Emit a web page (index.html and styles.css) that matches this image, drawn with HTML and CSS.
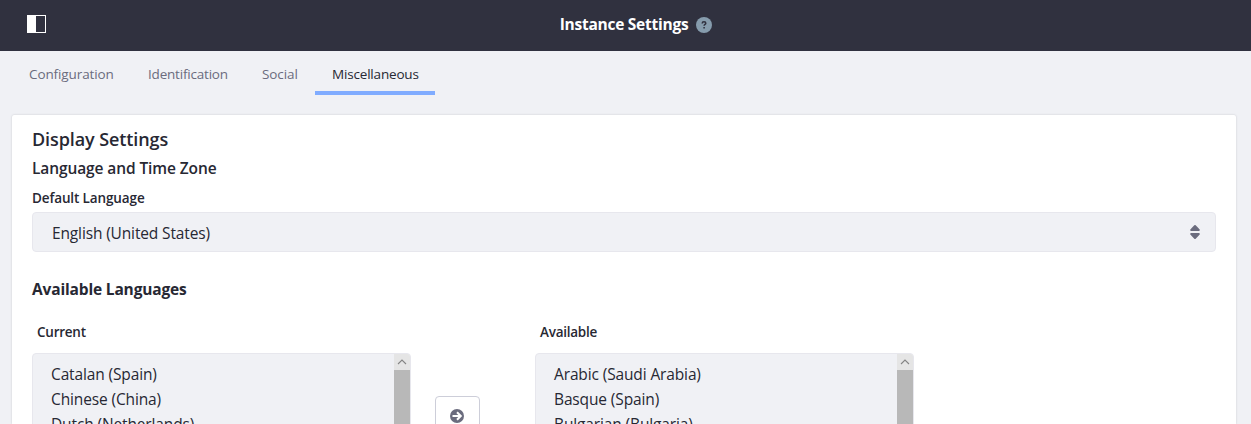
FILE: index.html
```html
<!DOCTYPE html>
<html lang="en">
<head>
<meta charset="utf-8">
<title>Instance Settings</title>
<link rel="stylesheet" href="styles.css">
</head>
<body>
<header class="topbar">
  <svg class="menu-icon" width="19" height="18" viewBox="0 0 19 18"><rect x=".5" y=".5" width="18" height="17" fill="none" stroke="#fff"/><path d="M0 0h9v18H0z" fill="#fff"/></svg>
  <h1 class="title">Instance Settings</h1>
  <svg class="help" width="16" height="16" viewBox="0 0 16 16"><circle cx="8" cy="8" r="8" fill="#869cad"/><path d="M6.2 6.4c0-1.1.8-1.6 1.8-1.6s1.8.5 1.8 1.4c0 1.3-1.7 1.2-1.7 2.6M8.1 9.9v1.5" fill="none" stroke="#30313f" stroke-width="1.5"/></svg>
</header>
<nav class="tabs">
  <a class="tab t1">Configuration</a>
  <a class="tab t2">Identification</a>
  <a class="tab t3">Social</a>
  <a class="tab t4 active">Miscellaneous</a>
</nav>
<main class="sheet">
  <h2 class="h-display">Display Settings</h2>
  <h3 class="h-zone">Language and Time Zone</h3>
  <label class="label">Default Language</label>
  <div class="select">
    <span>English (United States)</span>
    <svg width="10" height="14" viewBox="0 0 10 14" fill="#6b6c7e"><path d="M4.3.3Q5-.3 5.7.3L9.7 4.4Q10 6 9 6H1Q0 6 .3 4.4zM4.3 13.7Q5 14.3 5.7 13.7L9.7 9.6Q10 8 9 8H1Q0 8 .3 9.6z"/></svg>
  </div>
  <h3 class="h-available">Available Languages</h3>
  <div class="transfer">
    <section class="column">
      <label class="label list-label">Current</label>
      <div class="list">
        <ul class="options"><li>Catalan (Spain)</li><li>Chinese (China)</li><li>Dutch (Netherlands)</li></ul>
        <div class="scroll"><svg width="16" height="16" viewBox="0 0 16 16"><path d="M4 10l4-4 4 4" fill="none" stroke="#858585" stroke-width="1.1"/></svg><div class="thumb"></div></div>
      </div>
    </section>
    <button class="move"><svg width="14" height="14" viewBox="0 0 14 14"><circle cx="7" cy="7" r="7" fill="#6b6c7e"/><path d="M2.5 7h8M7 3.2L10.8 7 7 10.8" fill="none" stroke="#fff" stroke-width="2"/></svg></button>
    <section class="column">
      <label class="label list-label">Available</label>
      <div class="list">
        <ul class="options"><li>Arabic (Saudi Arabia)</li><li>Basque (Spain)</li><li>Bulgarian (Bulgaria)</li></ul>
        <div class="scroll"><svg width="16" height="16" viewBox="0 0 16 16"><path d="M4 10l4-4 4 4" fill="none" stroke="#858585" stroke-width="1.1"/></svg><div class="thumb"></div></div>
      </div>
    </section>
  </div>
</main>
</body>
</html>
```
FILE: styles.css
```css
* { box-sizing: border-box; }
html, body { height: 424px; overflow: hidden; }
body { margin: 0; background: #f0f1f5; color: #272833; font-family: "Open Sans", "Noto Sans", sans-serif; display: flex; flex-direction: column; }
h1, h2, h3, ul { margin: 0; padding: 0; }
.topbar { height: 51px; flex: none; background: #30313f; color: #fff; display: flex; align-items: center; justify-content: center; gap: 8px; padding: 0 12px 1px 33px; position: relative; }
.menu-icon { position: absolute; left: 27px; top: 15px; }
.title { padding-bottom: 3px; font-size: 15.5px; letter-spacing: -.25px; line-height: 22px; font-weight: 700; white-space: nowrap; }
.tabs { height: 44px; flex: none; display: flex; padding-left: 12px; }
.tab { padding: 13px 17px 0; height: 44px; font-size: 13.5px; letter-spacing: -.1px; line-height: 20px; color: #6b6c7e; white-space: nowrap; }
.t1 { width: 119px; }
.t2 { width: 114px; letter-spacing: -.2px; }
.t3 { width: 70px; }
.t4 { width: 120px; letter-spacing: -.18px; }
.active { color: #272833; border-bottom: 4px solid #80acff; }
.sheet { flex: 1; min-height: 0; overflow: hidden; width: 1224px; margin: 20px 0 0 12px; padding: 11px 20px 0; background: #fff; border-radius: 2px 2px 0 0; box-shadow: 0 0 2px rgba(39,40,51,.22); }
.h-display { font-size: 18px; letter-spacing: -.1px; line-height: 26px; font-weight: 600; }
.h-zone { margin-top: 5px; font-size: 15.5px; letter-spacing: -.1px; line-height: 22px; font-weight: 600; }
.label { display: block; margin-top: 9px; font-size: 13.5px; letter-spacing: -.12px; line-height: 20px; font-weight: 600; }
.select { margin-top: 4px; height: 40px; border: 1px solid #e7e7ed; border-radius: 4px; background: #f0f1f5; display: flex; align-items: center; justify-content: space-between; padding: 0 15px 0 19px; font-size: 15.5px; letter-spacing: -.14px; }
.select span { padding-top: 1px; }
.h-available { margin-top: 26px; font-size: 15.5px; letter-spacing: -.16px; line-height: 22px; font-weight: 700; }
.transfer { display: flex; }
.column { width: 379px; padding-top: 22px; }
.list-label { margin: 0 0 0 5px; letter-spacing: -.25px; }
.list { margin-top: 11px; height: 200px; display: flex; justify-content: space-between; border: 1px solid #e7e7ed; border-radius: 4px; background: #f0f1f5; overflow: hidden; }
.options { list-style: none; padding: 8px 0 0 18px; font-size: 15.5px; letter-spacing: -.13px; line-height: 25px; white-space: nowrap; }
.scroll { width: 16px; background: #e5e5e5; }
.scroll svg { display: block; }
.thumb { height: 190px; background: #b8b8b8; }
.move { flex: none; width: 45px; height: 40px; margin: 96px 56px 0 24px; padding: 0 1px 0 0; display: flex; align-items: center; justify-content: center; background: #fff; border: 1px solid #cdced9; border-radius: 4px; }
.transfer .column + .move { margin-right: 55px; }
```
